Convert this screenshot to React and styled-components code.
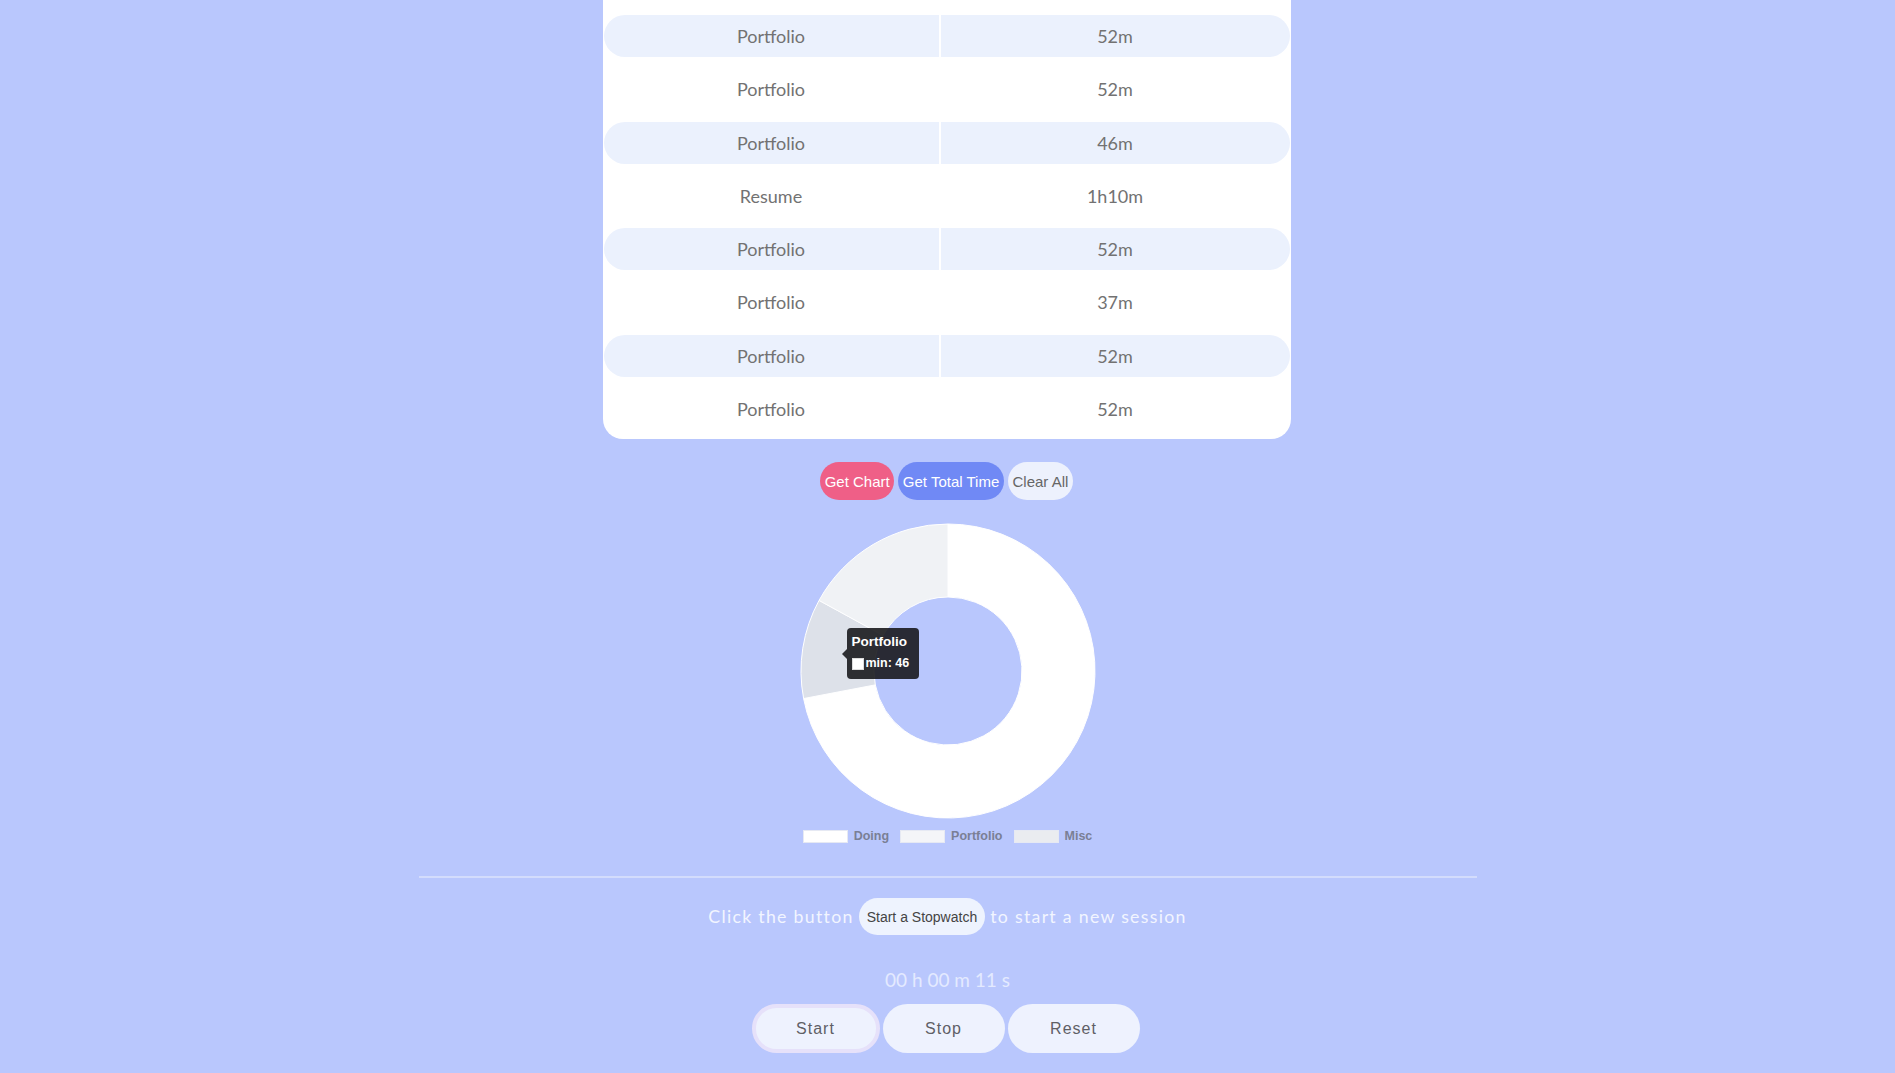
import React from "react";
import styled, { createGlobalStyle } from "styled-components";

const sessions = [
  { name: "Portfolio", time: "52m" },
  { name: "Portfolio", time: "52m" },
  { name: "Portfolio", time: "46m" },
  { name: "Resume", time: "1h10m" },
  { name: "Portfolio", time: "52m" },
  { name: "Portfolio", time: "37m" },
  { name: "Portfolio", time: "52m" },
  { name: "Portfolio", time: "52m" },
];

// doughnut slices, angles in degrees clockwise from 12 o'clock
const slices = [
  { label: "Doing", from: 0, to: 259.2, color: "#ffffff", legend: "#ffffff" },
  { label: "Portfolio", from: 259.2, to: 298.7, color: "#dde1e9", legend: "#f4f5f8" },
  { label: "Misc", from: 298.7, to: 360, color: "#f0f2f5", legend: "#eaecf0" },
];

const CX = 150;
const CY = 148;
const R = 147;
const r = 74;

const pt = (deg, rad) => {
  const a = (deg * Math.PI) / 180;
  return `${(CX + rad * Math.sin(a)).toFixed(2)} ${(CY - rad * Math.cos(a)).toFixed(2)}`;
};

const arcPath = (from, to) => {
  const large = to - from > 180 ? 1 : 0;
  return [
    `M ${pt(from, R)}`,
    `A ${R} ${R} 0 ${large} 1 ${pt(to, R)}`,
    `L ${pt(to, r)}`,
    `A ${r} ${r} 0 ${large} 0 ${pt(from, r)}`,
    "Z",
  ].join(" ");
};

const App = () => {
  return (
    <>
      <GlobalStyle />
      <Page>
        <Card>
          {sessions.map((s, i) => (
            <Row key={i} striped={i % 2 === 0}>
              <Cell>{s.name}</Cell>
              <Cell>{s.time}</Cell>
            </Row>
          ))}
        </Card>

        <ActionBar>
          <PillButton variant="pink">Get Chart</PillButton>
          <PillButton variant="blue">Get Total Time</PillButton>
          <PillButton variant="light">Clear All</PillButton>
        </ActionBar>

        <ChartWrap>
          <svg width="300" height="296" viewBox="0 0 300 296">
            {slices.map((s) => (
              <path key={s.label} d={arcPath(s.from, s.to)} fill={s.color} stroke="#ffffff" strokeWidth="1" />
            ))}
          </svg>
          <Tooltip>
            <TipTitle>Portfolio</TipTitle>
            <TipBody>
              <TipSwatch />
              min: 46
            </TipBody>
          </Tooltip>
        </ChartWrap>

        <Legend>
          {slices.map((s) => (
            <LegendItem key={s.label}>
              <LegendBox style={{ background: s.legend }} />
              {s.label}
            </LegendItem>
          ))}
        </Legend>

        <Divider />

        <Prompt>
          Click the button <SmallButton>Start a Stopwatch</SmallButton> to start a new session
        </Prompt>

        <Timer>00 h 00 m 11 s</Timer>

        <Controls>
          <ControlButton active w={128}>Start</ControlButton>
          <ControlButton w={122}>Stop</ControlButton>
          <ControlButton w={132}>Reset</ControlButton>
        </Controls>
      </Page>
    </>
  );
};

const GlobalStyle = createGlobalStyle`
  html, body {
    margin: 0;
    padding: 0;
    background: #b9c7fd;
    font-family: "Lato", "Liberation Sans", sans-serif;
    overflow: hidden;
  }
`;

const Page = styled.div`
  width: 100%;
  height: 1073px;
  display: flex;
  flex-direction: column;
  align-items: center;
  background: #b9c7fd;
`;

const Card = styled.div`
  width: 688px;
  box-sizing: border-box;
  background: #ffffff;
  border-radius: 0 0 20px 20px;
  padding: 15px 1px 9px;
  display: flex;
  flex-direction: column;
  gap: 11.3px;
  transform: translateX(-1px);
`;

const Row = styled.div`
  height: 42px;
  display: grid;
  grid-template-columns: 337px 1fr;
  border-radius: 21px;
  overflow: hidden;
  background: ${(p) => (p.striped ? "#ebf1fd" : "transparent")};
  & > div:first-child {
    border-right: 2px solid ${(p) => (p.striped ? "#ffffff" : "transparent")};
  }
`;

const Cell = styled.div`
  display: flex;
  align-items: center;
  justify-content: center;
  font-family: "Lato", sans-serif;
  font-size: 18px;
  color: #727272;
`;

const ActionBar = styled.div`
  margin-top: 23px;
  display: flex;
  gap: 4px;
  transform: translateX(-1px);
`;

const colors = {
  pink: { bg: "#ef5f87", fg: "#ffffff" },
  blue: { bg: "#7089f5", fg: "#ffffff" },
  light: { bg: "#edf1fd", fg: "#666666" },
};

const PillButton = styled.button`
  height: 38px;
  padding: 0 4.6px;
  border: none;
  border-radius: 19px;
  font-family: "Liberation Sans", Arial, sans-serif;
  font-size: 15px;
  background: ${(p) => colors[p.variant].bg};
  color: ${(p) => colors[p.variant].fg};
  cursor: pointer;
`;

const ChartWrap = styled.div`
  position: relative;
  margin-top: 23px;
  width: 300px;
  height: 296px;
  svg {
    display: block;
  }
`;

const Tooltip = styled.div`
  position: absolute;
  left: 49px;
  top: 105px;
  width: 62px;
  height: 43px;
  padding: 4px 5px;
  background: rgba(20, 20, 24, 0.88);
  border-radius: 4px;
  color: #ffffff;
  font-family: "Liberation Sans", Arial, sans-serif;
  font-weight: bold;
  &::before {
    content: "";
    position: absolute;
    left: -5px;
    top: 21px;
    border-top: 5px solid transparent;
    border-bottom: 5px solid transparent;
    border-right: 5px solid rgba(20, 20, 24, 0.88);
  }
`;

const TipTitle = styled.div`
  font-size: 13.5px;
  line-height: 16px;
  margin-top: 2px;
`;

const TipBody = styled.div`
  display: flex;
  align-items: center;
  gap: 2px;
  font-size: 12.5px;
  line-height: 15px;
  margin-top: 6px;
`;

const TipSwatch = styled.span`
  width: 12px;
  height: 12px;
  background: #ffffff;
  border: 1px solid #dddddd;
  box-sizing: border-box;
`;

const Legend = styled.div`
  margin-top: 5px;
  display: flex;
  gap: 11px;
  height: 24px;
  align-items: center;
`;

const LegendItem = styled.div`
  display: flex;
  align-items: center;
  gap: 6px;
  font-family: "Liberation Sans", Arial, sans-serif;
  font-size: 12.5px;
  font-weight: bold;
  color: #7a7f95;
`;

const LegendBox = styled.span`
  width: 45px;
  height: 13px;
  box-sizing: border-box;
  border: 1px solid #e6e9f3;
`;

const Divider = styled.div`
  margin-top: 28px;
  width: 1058px;
  height: 2px;
  background: #d3dcfc;
`;

const Prompt = styled.div`
  margin-top: 20px;
  display: flex;
  align-items: center;
  gap: 5px;
  font-family: "Lato", sans-serif;
  font-size: 17.7px;
  letter-spacing: 1.3px;
  color: #f2f5ff;
`;

const SmallButton = styled.button`
  height: 37px;
  padding: 0 8px;
  border: none;
  border-radius: 19px;
  background: #eef3fe;
  color: #444444;
  font-family: "Liberation Sans", Arial, sans-serif;
  font-size: 14px;
  letter-spacing: 0;
`;

const Timer = styled.div`
  margin-top: 33px;
  font-family: "Lato", sans-serif;
  font-size: 19px;
  color: #e4eaff;
  line-height: 24px;
`;

const Controls = styled.div`
  margin-top: 12px;
  display: flex;
  gap: 3px;
  align-items: center;
  transform: translateX(-2px);
`;

const ControlButton = styled.button`
  width: ${(p) => p.w}px;
  height: 49px;
  box-sizing: border-box;
  border-radius: 25px;
  border: ${(p) => (p.active ? "4px solid #e6e1fa" : "none")};
  background: #eef2fe;
  color: #5f5f66;
  font-family: "Liberation Sans", Arial, sans-serif;
  font-size: 16px;
  letter-spacing: 1px;
  cursor: pointer;
`;

export default App;
